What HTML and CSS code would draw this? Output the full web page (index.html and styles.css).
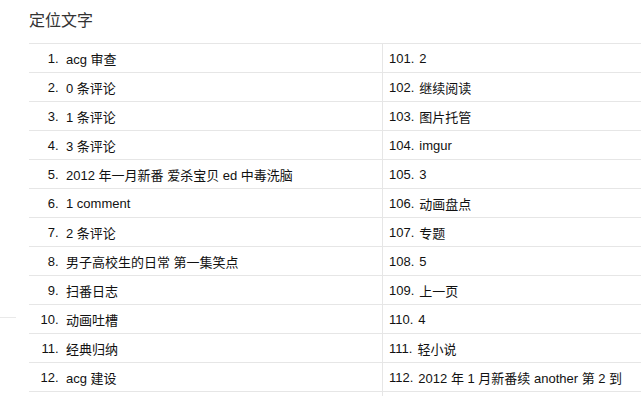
FILE: index.html
```html
<!DOCTYPE html>
<html lang="zh-CN">
<head>
<meta charset="utf-8">
<title>定位文字</title>
<link rel="stylesheet" href="styles.css">
</head>
<body>
<div class="page">
  <h1 class="title">定位文字</h1>
  <div class="grid">
    <div class="cell left"><span class="num">1.</span><span class="txt">acg 审查</span></div>
    <div class="cell right"><span class="num">101.</span><span class="txt">2</span></div>
    <div class="cell left"><span class="num">2.</span><span class="txt">0 条评论</span></div>
    <div class="cell right"><span class="num">102.</span><span class="txt">继续阅读</span></div>
    <div class="cell left"><span class="num">3.</span><span class="txt">1 条评论</span></div>
    <div class="cell right"><span class="num">103.</span><span class="txt">图片托管</span></div>
    <div class="cell left"><span class="num">4.</span><span class="txt">3 条评论</span></div>
    <div class="cell right"><span class="num">104.</span><span class="txt">imgur</span></div>
    <div class="cell left"><span class="num">5.</span><span class="txt">2012 年一月新番 爱杀宝贝 ed 中毒洗脑</span></div>
    <div class="cell right"><span class="num">105.</span><span class="txt">3</span></div>
    <div class="cell left"><span class="num">6.</span><span class="txt">1 comment</span></div>
    <div class="cell right"><span class="num">106.</span><span class="txt">动画盘点</span></div>
    <div class="cell left"><span class="num">7.</span><span class="txt">2 条评论</span></div>
    <div class="cell right"><span class="num">107.</span><span class="txt">专题</span></div>
    <div class="cell left"><span class="num">8.</span><span class="txt">男子高校生的日常 第一集笑点</span></div>
    <div class="cell right"><span class="num">108.</span><span class="txt">5</span></div>
    <div class="cell left"><span class="num">9.</span><span class="txt">扫番日志</span></div>
    <div class="cell right"><span class="num">109.</span><span class="txt">上一页</span></div>
    <div class="cell left"><span class="num">10.</span><span class="txt">动画吐槽</span></div>
    <div class="cell right"><span class="num">110.</span><span class="txt">4</span></div>
    <div class="cell left"><span class="num">11.</span><span class="txt">经典归纳</span></div>
    <div class="cell right"><span class="num">111.</span><span class="txt">轻小说</span></div>
    <div class="cell left"><span class="num">12.</span><span class="txt">acg 建设</span></div>
    <div class="cell right"><span class="num">112.</span><span class="txt">2012 年 1 月新番续 another 第 2 到</span></div>
    <div class="cell left empty"></div>
    <div class="cell right empty"></div>
  </div>
  <div class="stray-rule"></div>
</div>
</body>
</html>
```

FILE: styles.css
```css
html, body {
  margin: 0;
  padding: 0;
  background: #ffffff;
}

body {
  font-family: "Liberation Sans", Arial, "Noto Sans CJK SC", sans-serif;
  font-size: 13px;
  color: #111111;
}

.page {
  position: relative;
  padding-left: 29px;
  height: 396px;
  overflow: hidden;
}

.title {
  margin: 0;
  height: 43px;
  line-height: 42px;
  font-size: 16px;
  font-weight: normal;
  color: #333333;
  font-family: "Liberation Sans", "Noto Sans CJK SC", sans-serif;
}

.grid {
  display: grid;
  grid-template-columns: 354px 1fr;
  border-top: 1px solid #e6e6e6;
}

.cell {
  display: flex;
  align-items: center;
  height: 28px;
  border-bottom: 1px solid #e6e6e6;
  white-space: nowrap;
  overflow: hidden;
}

.left {
  border-right: 1px solid #e6e6e6;
}

.left .num {
  width: 29.5px;
  text-align: right;
  margin-right: 7.5px;
}

.right {
  padding-left: 6px;
}

.right .num {
  margin-right: 5px;
}

.stray-rule {
  position: absolute;
  left: 0;
  top: 317px;
  width: 16px;
  height: 1px;
  background: #e9e9e9;
}
```
